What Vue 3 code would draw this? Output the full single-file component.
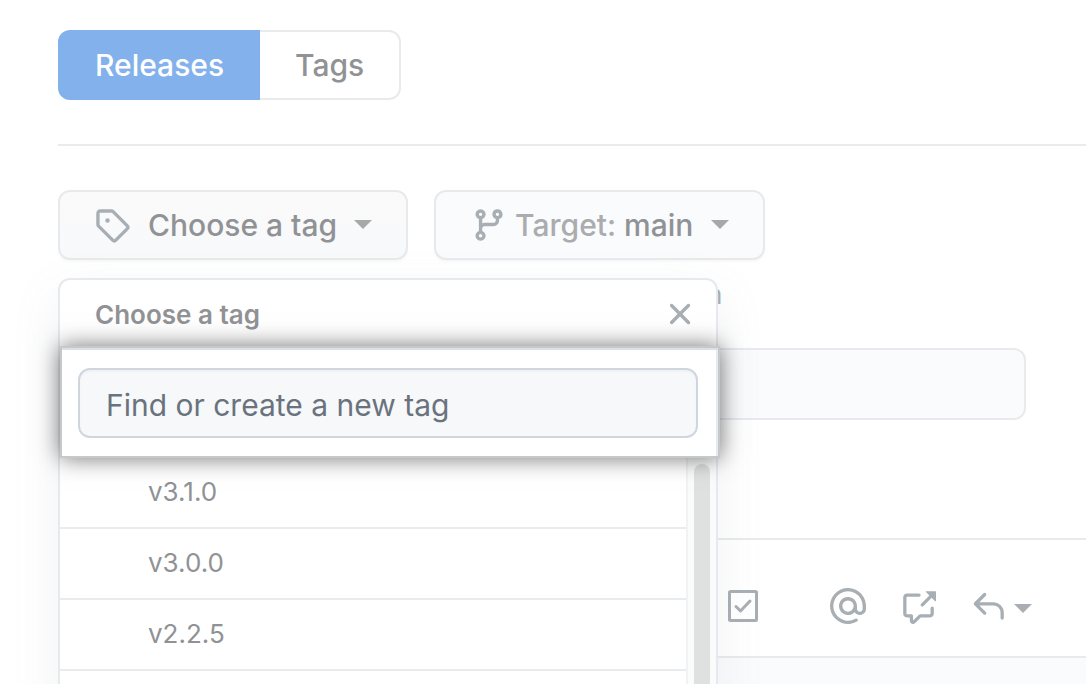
<script setup>
import { ref } from 'vue'

const query = ref('')
const title = ref('')
const tags = ['v3.1.0', 'v3.0.0', 'v2.2.5', '']
</script>

<template>
  <main class="page">
    <nav class="tabs">
      <a class="tab active" href="#releases">Releases</a>
      <a class="tab" href="#tags">Tags</a>
    </nav>

    <div class="pickers">
      <div class="picker">
        <button class="btn btn-tag" type="button">
          <svg class="icon" viewBox="0 0 16 16"><path fill-rule="evenodd" d="M2.5 7.775V2.75a.25.25 0 01.25-.25h5.025a.25.25 0 01.177.073l6.25 6.25a.25.25 0 010 .354l-5.025 5.025a.25.25 0 01-.354 0l-6.25-6.25a.25.25 0 01-.073-.177zm-1.5 0V2.75C1 1.784 1.784 1 2.75 1h5.025c.464 0 .91.184 1.238.513l6.25 6.25a1.75 1.75 0 010 2.474l-5.026 5.026a1.75 1.75 0 01-2.474 0l-6.25-6.25A1.75 1.75 0 011 7.775zM6 5a1 1 0 100 2 1 1 0 000-2z" /></svg>
          <span class="label">Choose a tag</span>
          <span class="caret"></span>
        </button>

        <section class="menu">
          <header class="menu-head">
            <h2>Choose a tag</h2>
            <button class="close" type="button" aria-label="Close">
              <svg class="icon" viewBox="0 0 16 16"><path d="M3.72 3.72a.75.75 0 011.06 0L8 6.94l3.22-3.22a.75.75 0 111.06 1.06L9.06 8l3.22 3.22a.75.75 0 11-1.06 1.06L8 9.06l-3.22 3.22a.75.75 0 01-1.06-1.06L6.94 8 3.72 4.78a.75.75 0 010-1.06z" /></svg>
            </button>
          </header>
          <div class="search">
            <input v-model="query" type="text" placeholder="Find or create a new tag" aria-label="Find or create a new tag" />
          </div>
          <div class="scroller">
            <ul class="list">
              <li v-for="tag in tags" :key="tag">{{ tag }}</li>
            </ul>
            <div class="track"><div class="thumb"></div></div>
          </div>
        </section>
      </div>

      <button class="btn btn-target" type="button">
        <svg class="icon" viewBox="0 0 16 16"><path fill-rule="evenodd" d="M11.75 2.5a.75.75 0 100 1.5.75.75 0 000-1.5zm-2.25.75a2.25 2.25 0 113 2.122V6A2.5 2.5 0 0110 8.5H6a1 1 0 00-1 1v1.128a2.251 2.251 0 11-1.5 0V5.372a2.25 2.25 0 111.5 0v1.836A2.492 2.492 0 016 7h4a1 1 0 001-1v-.628A2.25 2.25 0 019.5 3.25zM4.25 12a.75.75 0 100 1.5.75.75 0 000-1.5zM3.5 3.25a.75.75 0 111.5 0 .75.75 0 01-1.5 0z" /></svg>
        <span class="label"><span class="muted">Target:</span> main</span>
        <span class="caret"></span>
      </button>
    </div>

    <p class="hint">n</p>
    <input v-model="title" class="title" type="text" aria-label="Release title" />

    <section class="editor">
      <div class="toolbar">
        <button type="button" aria-label="Task list">
          <svg class="icon" viewBox="0 0 36 36"><g fill="none" stroke="currentColor" stroke-width="3" stroke-linejoin="round"><rect x="4.500" y="3.500" width="27" height="29" rx="1" /><path d="M11 18.500l4.500 4.500 9.500-10" stroke-linecap="round" /></g></svg>
        </button>
        <button class="mention" type="button" aria-label="Mention">
          <svg class="icon" viewBox="0 0 16 16"><path fill-rule="evenodd" d="M4.75 2.37a6.5 6.5 0 006.5 11.26.75.75 0 01.75 1.298 8 8 0 113.994-7.273.754.754 0 01.006.095v1.5a2.75 2.75 0 01-5.072 1.475A4 4 0 1112 8v1.25a1.25 1.25 0 002.5 0V7.867a6.5 6.5 0 00-9.75-5.496V2.37zM10.5 8a2.5 2.5 0 10-5 0 2.5 2.5 0 005 0z" /></svg>
        </button>
        <button type="button" aria-label="Reference">
          <svg class="icon small" viewBox="0 0 16 16"><path fill-rule="evenodd" d="M16 1.25v4.146a.25.25 0 01-.427.177L14.03 4.03l-3.75 3.75a.75.75 0 11-1.06-1.06l3.75-3.75-1.543-1.543A.25.25 0 0111.604 1h4.146a.25.25 0 01.25.25zM2.75 3.5a.25.25 0 00-.25.25v7.5c0 .138.112.25.25.25h2a.75.75 0 01.75.75v2.19l2.72-2.72a.75.75 0 01.53-.22h4.5a.25.25 0 00.25-.25v-2.5a.75.75 0 111.5 0v2.5A1.75 1.75 0 0113.25 13H9.06l-2.573 2.573A1.457 1.457 0 014 14.543V13H2.75A1.75 1.75 0 011 11.25v-7.5C1 2.784 1.784 2 2.75 2h5.5a.75.75 0 010 1.5h-5.5z" /></svg>
        </button>
        <button type="button" aria-label="Saved replies">
          <svg class="icon small" viewBox="0 0 16 16"><path d="M6.78 1.97a.75.75 0 010 1.06L3.81 6h6.44A4.75 4.75 0 0115 10.75v2.5a.75.75 0 01-1.5 0v-2.5a3.25 3.25 0 00-3.25-3.25H3.81l2.97 2.97a.75.75 0 11-1.06 1.06L1.47 7.28a.75.75 0 010-1.06l4.25-4.25a.75.75 0 011.06 0z" /></svg>
          <span class="caret"></span>
        </button>
      </div>
      <div class="editor-body"></div>
    </section>
  </main>
</template>

<style>
body {
  margin: 0;
  background: #fff;
}
</style>

<style scoped>
.page {
  box-sizing: border-box;
  display: flex;
  flex-direction: column;
  height: 100vh;
  padding: 30px 0 0 58px;
  overflow: hidden;
  color: #909295;
  font-family: Inter, "Liberation Sans", sans-serif;
  font-size: 30px;
  line-height: 36px;
}

.page *,
.page *::before {
  box-sizing: border-box;
}

button,
input {
  margin: 0;
  color: inherit;
  font: inherit;
}

button {
  display: flex;
  align-items: center;
  padding: 0;
  border: 0;
  background: none;
}

.icon {
  display: block;
  flex: none;
  width: 36px;
  height: 36px;
  color: #a8afb4;
  fill: currentColor;
}

.icon.small {
  width: 35px;
  height: 35px;
}

.caret {
  flex: none;
  margin-bottom: 2px;
  border: 9px solid transparent;
  border-top-color: #a6a8aa;
  border-bottom: 0;
}

.tabs {
  display: flex;
  flex: none;
  padding-bottom: 44px;
  border-bottom: 2px solid #e9ecef;
}

.tab {
  padding: 15px 35px;
  border: 2px solid #e8eaed;
  border-left: 0;
  border-radius: 0 12px 12px 0;
  color: inherit;
  font-weight: 500;
  text-decoration: none;
}

.tab.active {
  padding: 15px 34px 15px 35px;
  border: 2px solid #82b1ec;
  border-radius: 12px 0 0 12px;
  background: #82b1ec;
  color: #fff;
}

.pickers {
  display: flex;
  flex: none;
  gap: 26px;
  padding-top: 44px;
}

.picker {
  position: relative;
}

.btn {
  height: 70px;
  padding: 0 34px;
  border: 2px solid #e8e9ea;
  border-radius: 12px;
  background: #fafbfd;
  box-shadow: 0 2px 2px #f9f9fa;
  font-weight: 500;
  white-space: nowrap;
}

.btn-tag {
  background: linear-gradient(#fafafa, #f8f9fb);
}

.btn-tag .label {
  padding: 0 17px 0 18px;
}

.btn-target {
  padding-left: 35px;
}

.btn-target .label {
  padding: 0 18px 0 8px;
}

.muted {
  color: #aaacae;
}

.menu {
  position: absolute;
  z-index: 2;
  top: 88px;
  left: 0;
  width: 660px;
  border: 2px solid #e6e9ed;
  border-radius: 12px 12px 0 0;
  background: #fff;
  box-shadow: 0 16px 48px rgba(140, 149, 159, 0.12);
}

.menu-head {
  display: flex;
  align-items: center;
  justify-content: space-between;
  height: 66px;
  padding: 2px 18px 0 35px;
}

.menu-head h2 {
  margin: 0;
  padding-top: 2px;
  font-size: 26px;
  font-weight: 600;
}

.search {
  position: relative;
  z-index: 1;
  margin-right: -4px;
  padding: 20px 20px 18px 16px;
  border: 2px solid #c6c8ca;
  background: #fff;
  box-shadow: inset 0 2px #dbe0e5, inset -2px 0 #e6e9ed, 0 0 22px rgba(0, 0, 0, 0.55);
}

.search input {
  display: block;
  width: 100%;
  height: 70px;
  padding: 4px 26px 0;
  border: 2px solid #cfd6de;
  border-radius: 12px;
  outline: 0;
  background: #f6f8fa;
  box-shadow: inset 0 2px 2px #f0f3f6;
}

.search input::placeholder {
  color: #6a737d;
  opacity: 1;
}

.scroller {
  display: flex;
}

.list {
  flex: 1;
  margin: 0;
  padding: 0;
  border-right: 2px solid #f1f2f3;
  list-style: none;
}

.list li {
  height: 71px;
  padding: 16px 88px;
  border-bottom: 2px solid #e9ecef;
  font-size: 26px;
}

.track {
  width: 28px;
  padding: 6px 6px 0;
  background: #fafbfb;
}

.thumb {
  width: 16px;
  height: 100%;
  border-radius: 8px;
  background: #dfe1e0;
}

.hint {
  flex: none;
  margin: 16px 0 34px;
  padding-left: 649px;
  color: #a8aeb3;
  font-size: 26px;
  line-height: 38px;
}

.title {
  flex: none;
  height: 72px;
  margin-right: 60px;
  padding: 0 24px;
  border: 2px solid #e8eaed;
  border-radius: 12px;
  background: #fafbfd;
}

.editor {
  display: flex;
  flex: 1;
  flex-direction: column;
  margin-top: 118px;
  border-top: 2px solid #e8eaed;
}

.toolbar {
  display: flex;
  gap: 35px;
  height: 118px;
  padding: 48px 0 0 667px;
  border-bottom: 2px solid #e8eaed;
}

.toolbar button {
  height: 36px;
}

.toolbar .mention {
  margin-left: 34px;
}

.toolbar .caret {
  margin: 4px 0 0 8px;
  border-top-color: #a8aeb3;
}

.editor-body {
  flex: 1;
  background: #fafbfd;
}
</style>
